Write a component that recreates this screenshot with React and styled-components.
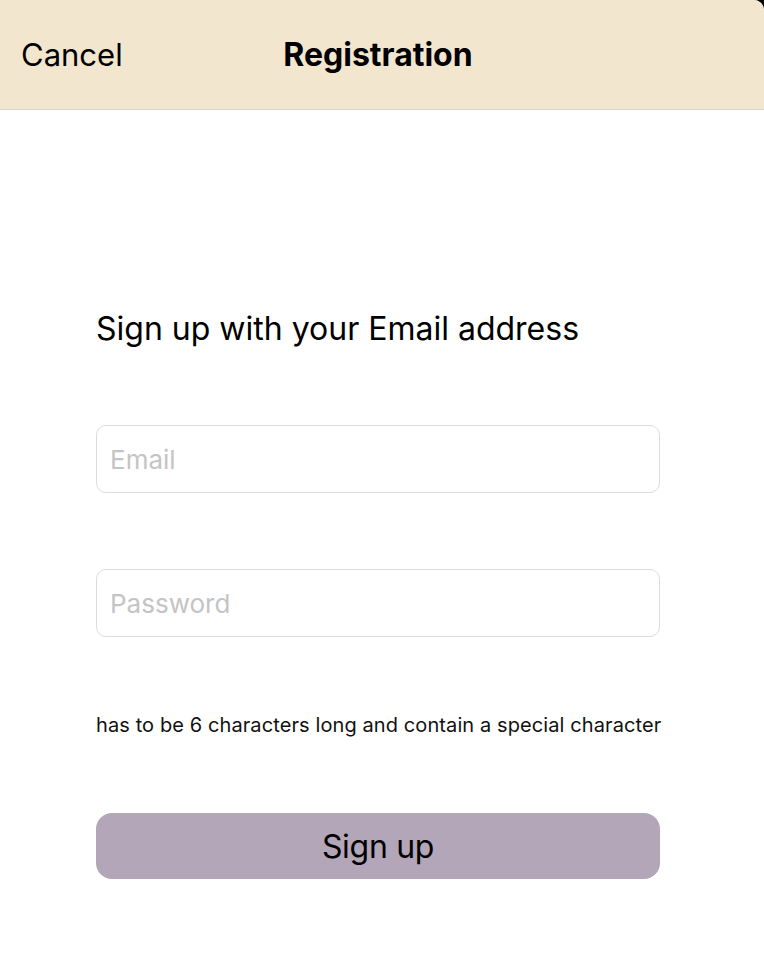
import React from "react";
import styled, { createGlobalStyle } from "styled-components";

const Global = createGlobalStyle`
  html, body { margin: 0; padding: 0; background: #000; }
  body { font-family: Inter, "Noto Sans", sans-serif; -webkit-font-smoothing: antialiased; }
  * { box-sizing: border-box; }
`;

const Screen = styled.div`
  width: 764px;
  height: 968px;
  background: #fff;
  border-top-right-radius: 10px;
  overflow: hidden;
  display: flex;
  flex-direction: column;
`;

const Header = styled.header`
  height: 110px;
  background: #f2e6cf;
  border-bottom: 1px solid #d6d2cb;
  display: grid;
  grid-template-columns: 1fr auto 1fr;
  align-items: center;
  padding: 0 21px;
`;

const CancelButton = styled.button`
  justify-self: start;
  background: none;
  border: none;
  padding: 0;
  font: inherit;
  font-size: 31px;
  color: #000;
`;

const Title = styled.h1`
  margin: 0;
  font-size: 32px;
  font-weight: 700;
  color: #000;
  transform: translateX(-4px);
`;

const Form = styled.main`
  display: flex;
  flex-direction: column;
  padding: 0 104px 0 96px;
`;

const Heading = styled.h2`
  margin: 199px 0 0;
  font-size: 32px;
  font-weight: 400;
  line-height: 40px;
  color: #000;
`;

const Field = styled.input`
  height: 68px;
  margin-top: 76px;
  border: 1px solid #dcdcdc;
  border-radius: 10px;
  padding: 0 13px;
  font: inherit;
  font-size: 26px;
  color: #000;
  outline: none;
  &::placeholder { color: #c4c4c4; }
`;

const Hint = styled.p`
  margin: 76px 0 0;
  font-size: 20px;
  line-height: 24px;
  letter-spacing: 0.1px;
  color: #111;
  white-space: nowrap;
`;

const SubmitButton = styled.button`
  margin-top: 76px;
  height: 66px;
  border: none;
  border-radius: 16px;
  background: #b2a6b8;
  font: inherit;
  font-size: 32px;
  color: #000;
  letter-spacing: -0.3px;
`;

export default function App() {
  return (
    <>
      <Global />
      <Screen>
        <Header>
          <CancelButton>Cancel</CancelButton>
          <Title>Registration</Title>
          <span />
        </Header>
        <Form>
          <Heading>Sign up with your Email address</Heading>
          <Field placeholder="Email" />
          <Field type="password" placeholder="Password" />
          <Hint>has to be 6 characters long and contain a special character</Hint>
          <SubmitButton>Sign up</SubmitButton>
        </Form>
      </Screen>
    </>
  );
}
